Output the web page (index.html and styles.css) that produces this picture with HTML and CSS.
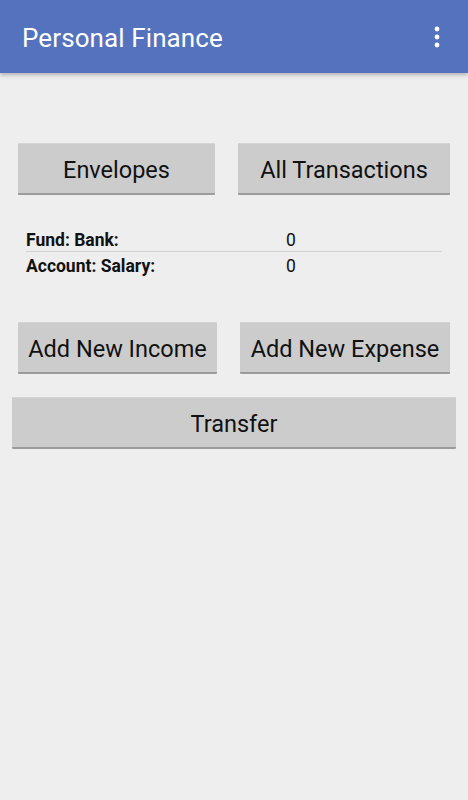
FILE: index.html
```html
<!DOCTYPE html>
<html>
<head>
<meta charset="utf-8">
<link rel="stylesheet" href="styles.css">
</head>
<body>
<header class="appbar">
  <h1 class="title">Personal Finance</h1>
  <svg class="overflow" width="8" height="24" viewBox="0 0 8 24">
    <circle cx="4" cy="4" r="2.4" fill="#fff"/>
    <circle cx="4" cy="12" r="2.4" fill="#fff"/>
    <circle cx="4" cy="20" r="2.4" fill="#fff"/>
  </svg>
</header>
<main class="content">
  <div class="row row-top">
    <button class="btn btn-env">Envelopes</button>
    <button class="btn btn-all">All Transactions</button>
  </div>
  <div class="summary">
    <div class="line line-first"><span class="label">Fund: Bank:</span><span class="value">0</span></div>
    <div class="line line-second"><span class="label">Account: Salary:</span><span class="value">0</span></div>
  </div>
  <div class="row row-add">
    <button class="btn btn-inc">Add New Income</button>
    <button class="btn btn-exp">Add New Expense</button>
  </div>
  <div class="row row-transfer">
    <button class="btn btn-transfer">Transfer</button>
  </div>
</main>
</body>
</html>
```

FILE: styles.css
```css
html, body {
  margin: 0;
  padding: 0;
  background: #eeeeee;
  font-family: Roboto, "Noto Sans", sans-serif;
  width: 468px;
  height: 800px;
  overflow: hidden;
}
.appbar {
  height: 73px;
  background: #5472bd;
  display: flex;
  align-items: center;
  justify-content: space-between;
  padding: 0 27px 0 22px;
  box-sizing: border-box;
  box-shadow: 0 2px 4px rgba(0,0,0,0.25);
  position: relative;
}
.title {
  margin: 0;
  color: #ffffff;
  font-weight: 400;
  font-size: 26px;
  letter-spacing: 0.1px;
  padding-top: 2px;
}
.overflow {
  display: block;
  margin-top: 0;
}
.content {
  display: flex;
  flex-direction: column;
}
.row {
  display: flex;
}
.row-top {
  padding: 70px 0 0 18px;
  gap: 23px;
}
.btn {
  font-family: Roboto, "Noto Sans", sans-serif;
  font-size: 23.5px;
  color: #111111;
  background: #cccccc;
  border: none;
  border-top: 1px solid #d4d4d4;
  border-bottom: 2px solid #9c9c9c;
  border-radius: 1px;
  height: 52px;
  padding: 3px 0 0 0;
  box-sizing: border-box;
  margin: 0;
  white-space: nowrap;
}
.btn-env { width: 197px; }
.btn-all { width: 212px; }
.summary {
  padding: 31px 26px 0 26px;
  display: flex;
  flex-direction: column;
}
.line {
  display: flex;
  height: 26px;
  align-items: center;
  font-size: 17.5px;
  color: #111111;
  box-sizing: border-box;
}
.line-first {
  border-bottom: 1px solid #d2d2d2;
  padding-top: 2px;
}
.line-second {
  padding-top: 2px;
}
.label {
  font-weight: 700;
  width: 260px;
}
.value {
  font-weight: 400;
}
.row-add {
  padding: 44px 0 0 18px;
  gap: 23px;
}
.btn-inc { width: 199px; }
.btn-exp { width: 210px; }
.row-transfer {
  padding: 23px 0 0 12px;
}
.btn-transfer { width: 444px; }
```
